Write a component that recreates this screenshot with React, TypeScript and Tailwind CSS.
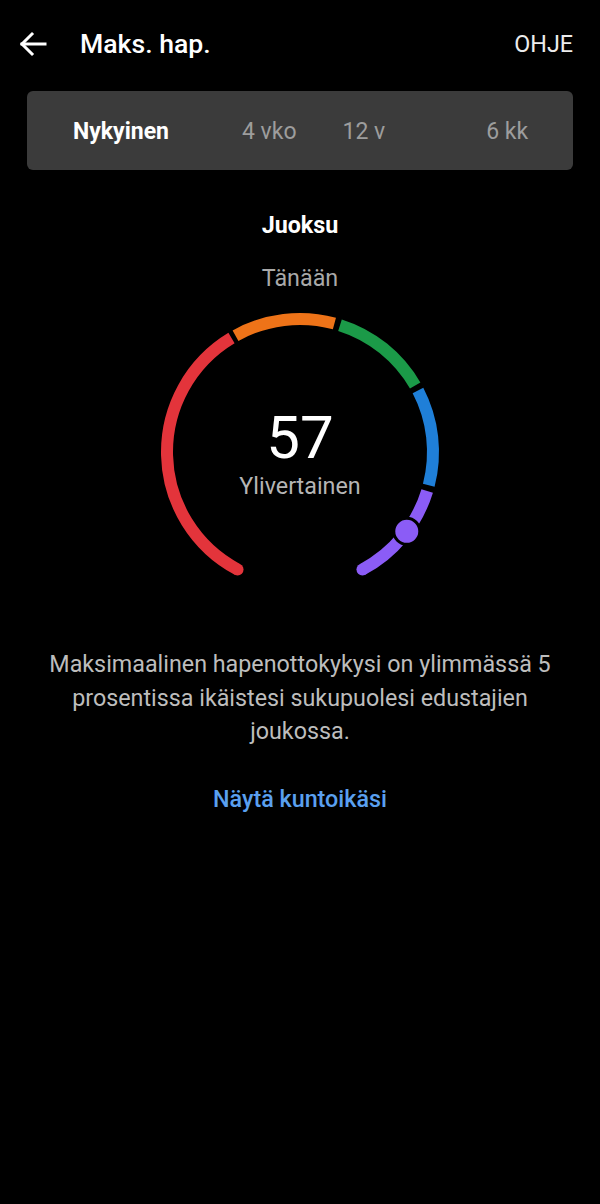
import React from 'react'

const CX = 150
const CY = 150
const R = 133

const pt = (deg: number) => {
  const a = (deg * Math.PI) / 180
  return [CX + R * Math.sin(a), CY - R * Math.cos(a)]
}

const arc = (a0: number, a1: number) => {
  const [x0, y0] = pt(a0)
  const [x1, y1] = pt(a1)
  const large = a1 - a0 > 180 ? 1 : 0
  return `M ${x0} ${y0} A ${R} ${R} 0 ${large} 1 ${x1} ${y1}`
}

const segments = [
  { from: -152, to: -31, color: '#e3343b' },
  { from: -29, to: 15, color: '#ee7318' },
  { from: 17.5, to: 60, color: '#1b9a48' },
  { from: 62.5, to: 104.5, color: '#1f7fd8' },
  { from: 107, to: 152, color: '#8b5cf6' },
]

const tabs = [
  { label: 'Nykyinen', active: true, ml: 'ml-[46px]' },
  { label: '4 vko', active: false, ml: 'ml-[73px]' },
  { label: '12 v', active: false, ml: 'ml-[46px]' },
  { label: '6 kk', active: false, ml: 'ml-[101px]' },
]

const Gauge = () => {
  const [sx, sy] = pt(-152)
  const [ex, ey] = pt(152)
  const [kx, ky] = pt(126.6)
  return (
    <div className="relative mx-auto mt-[10px] h-[280px] w-[300px]">
      <svg width="300" height="280" viewBox="0 0 300 280" className="absolute inset-0">
        {segments.map((s) => (
          <path key={s.from} d={arc(s.from, s.to)} stroke={s.color} strokeWidth="12" fill="none" />
        ))}
        <circle cx={sx} cy={sy} r="6" fill="#e3343b" />
        <circle cx={ex} cy={ey} r="6" fill="#8b5cf6" />
        <circle cx={kx} cy={ky} r="13" fill="#8b5cf6" stroke="#000" strokeWidth="3" />
      </svg>
      <div className="absolute left-0 right-0 top-[104px] flex flex-col items-center">
        <div className="text-[60px] leading-[64px] text-white">57</div>
        <div className="mt-[2px] text-[23.3px] leading-[28px] text-[#b5b5b5]">Ylivertainen</div>
      </div>
    </div>
  )
}

export default function App() {
  return (
    <div className="min-h-[1204px] w-[600px] bg-black" style={{ fontFamily: 'Roboto, "Noto Sans", sans-serif' }}>
      <header className="flex h-[88px] items-center">
        <svg width="28" height="26" viewBox="0 0 28 26" className="ml-[19px]" fill="none" stroke="#fff" strokeWidth="3" strokeLinecap="square">
          <path d="M3 13 H26" />
          <path d="M13 3 L3 13 L13 23" />
        </svg>
        <h1 className="ml-[33px] text-[26.6px] font-medium text-white">Maks. hap.</h1>
        <span className="ml-auto mr-[27px] text-[23.3px] text-[#ececec]">OHJE</span>
      </header>

      <div className="mx-[27px] mt-[3px] flex h-[79px] items-center rounded-[6px] bg-[#3b3b3b] pt-[4px]">
        {tabs.map((t) => (
          <span
            key={t.label}
            className={`${t.ml} text-[23px] ${t.active ? 'font-bold text-white' : 'text-[#9d9d9d]'}`}
          >
            {t.label}
          </span>
        ))}
      </div>

      <div className="mt-[41px] text-center text-[23.3px] font-bold leading-[28px] text-white">Juoksu</div>
      <div className="mt-[25px] text-center text-[23.3px] leading-[28px] text-[#a9a9a9]">Tänään</div>

      <Gauge />

      <p className="mt-[66px] px-[40px] text-center text-[23.3px] leading-[33.5px] text-[#bdbdbd]">
        Maksimaalinen hapenottokykysi on ylimmässä 5 prosentissa ikäistesi sukupuolesi edustajien joukossa.
      </p>

      <div className="mt-[34px] text-center text-[23.3px] font-medium leading-[33.5px] text-[#5aa0f0]">
        Näytä kuntoikäsi
      </div>
    </div>
  )
}
